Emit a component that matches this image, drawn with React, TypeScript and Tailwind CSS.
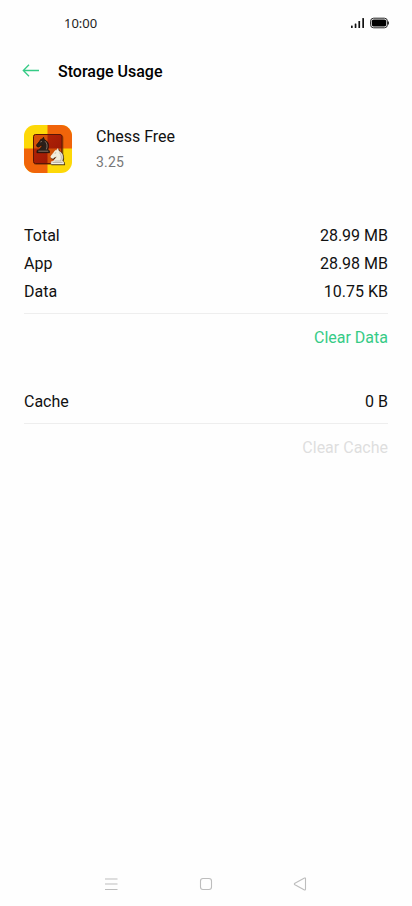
type Row = { label: string; value: string };

const usage: Row[] = [
  { label: "Total", value: "28.99 MB" },
  { label: "App", value: "28.98 MB" },
  { label: "Data", value: "10.75 KB" },
];

const KNIGHT =
  "M1.200 16h12.600l-.2-2-1.500-1.300c1.500-3.600.8-7.500-2.700-9.300L8.600 2.700 7.800.5 6.700 2.300 5 2.700 3.800 4.600.8 8.300l.5 1.700 1.800.4 1.700-1.300 2.200-.3-2.600 3-.6 1.200-2.400.7z";

function ChessIcon() {
  return (
    <svg className="size-12" viewBox="0 0 48 48">
      <defs>
        <clipPath id="tile">
          <rect width="48" height="48" rx="11" />
        </clipPath>
        <linearGradient id="red" x1="0" y1="0" x2="1" y2="1">
          <stop offset="0" stopColor="#b82606" />
          <stop offset="1" stopColor="#951505" />
        </linearGradient>
      </defs>
      <g clipPath="url(#tile)">
        <rect width="48" height="48" fill="#fdd808" />
        <rect x="23.500" width="25" height="23.500" fill="#f0640a" />
        <rect y="23.500" width="23.500" height="25" fill="#f0640a" />
        <rect x="9.500" y="10" width="30" height="30" rx="3" fill="#5c2500" opacity=".45" />
        <rect x="9.500" y="9.500" width="28.500" height="29" rx="2" fill="url(#red)" />
        <path d="M10 11.500q0-1.500 1.500-1.500h12v13.500H10z" fill="#d65208" />
        <path d="M23.500 23.500H37.500V36.500q0 1.500-1.500 1.500H23.500z" fill="#d05008" />
        <rect x="9.500" y="9.500" width="28.500" height="29" rx="2" fill="none" stroke="#591606" strokeWidth="1" />
      </g>
      <g transform="translate(11.700 11.700)" strokeLinejoin="round">
        <path d={KNIGHT} fill="#2b1f1a" stroke="#17100b" strokeWidth=".7" />
        <path d="M9.300 4.500c2.200 1.900 2.600 5 1.400 8.200M2.600 14.500h10M4.700 5.300l1.500-.6" fill="none" stroke="#c4a58c" strokeWidth=".6" />
      </g>
      <g transform="translate(26 23)" strokeLinejoin="round">
        <path d={KNIGHT} transform="translate(.7 .7)" fill="#241208" stroke="#241208" strokeWidth="1.200" opacity=".75" />
        <path d={KNIGHT} fill="#f1ecdd" stroke="#fffdf0" strokeWidth=".5" />
        <path d="M9.300 4.500c2.200 1.900 2.600 5 1.400 8.200M2.600 14.500h10M4.700 5.300l1.500-.6M4.500 13h7" fill="none" stroke="#8b8170" strokeWidth=".5" />
      </g>
    </svg>
  );
}

function StatusBar() {
  return (
    <div className="flex h-[46px] items-center justify-between pl-16 pr-[23px]">
      <span className="font-['Noto_Sans'] text-[13px] leading-[18px] text-[#222]">10:00</span>
      <div className="flex items-center gap-[5px]">
        <svg width="14" height="12" viewBox="0 0 14 12" fill="#111">
          <rect x="0" y="8.500" width="1.700" height="2.500" rx=".5" />
          <rect x="3.700" y="6.500" width="1.700" height="4.500" rx=".5" />
          <rect x="7.400" y="4" width="1.700" height="7" rx=".5" />
          <rect x="11.300" y="1" width="1.700" height="10" rx=".5" />
        </svg>
        <svg width="19" height="12" viewBox="0 0 19 12">
          <rect x=".6" y="1.200" width="16.800" height="9.600" rx="3" fill="none" stroke="#222" strokeWidth="1" />
          <rect x="1.800" y="2.400" width="14.400" height="7.200" rx="1.800" fill="#000" />
          <path d="M18.400 4.500v3" stroke="#222" strokeWidth="1" />
        </svg>
      </div>
    </div>
  );
}

function UsageRow({ label, value }: Row) {
  return (
    <div className="flex h-7 items-center justify-between">
      <span>{label}</span>
      <span>{value}</span>
    </div>
  );
}

function NavBar() {
  return (
    <nav className="flex h-11 items-center justify-between pl-[104px] pr-[105px] text-[#bdbdbd]">
      <svg width="14" height="14" viewBox="0 0 14 14" fill="none" stroke="currentColor">
        <path d="M1 2h12.500M1 7h12.500M1 12.500h12.500" />
      </svg>
      <svg width="14" height="14" viewBox="0 0 14 14" fill="none" stroke="currentColor" strokeWidth="1.100">
        <rect x="1.500" y="1.500" width="11" height="11" rx="2.500" />
      </svg>
      <svg width="14" height="14" viewBox="0 0 14 14" fill="none" stroke="currentColor" strokeWidth="1.100" strokeLinejoin="round">
        <path d="M11.500 1.100 1.900 6.200q-1.100.7 0 1.500l9.600 5.200q1 .4 1-.8V1.800q0-1.100-1-.7z" />
      </svg>
    </nav>
  );
}

export default function App() {
  return (
    <div className="flex h-[906px] w-full flex-col bg-[#fefefe] font-[Roboto,sans-serif] text-base text-[#111]">
      <StatusBar />
      <header className="flex h-[50px] items-center pl-[22px]">
        <svg width="18" height="14" viewBox="0 0 18 14" fill="none" stroke="#36cb86" strokeWidth="1.300">
          <path d="M17 6.500H1.500M7 .8 1.300 6.500 7 12.200" />
        </svg>
        <h1 className="ml-[18px] pt-0.5 font-medium text-black">Storage Usage</h1>
      </header>
      <main className="flex flex-1 flex-col px-6">
        <section className="mt-7 flex h-[49px] items-center gap-6">
          <ChessIcon />
          <div className="pt-0.5">
            <div className="h-6">Chess Free</div>
            <div className="pt-px text-sm leading-6 tracking-[0.2px] text-[#777]">3.25</div>
          </div>
        </section>
        <section className="mt-[49px]">
          {usage.map((row) => (
            <UsageRow key={row.label} {...row} />
          ))}
          <div className="mt-[7px] flex h-12 items-center justify-end border-t border-[#eee]">
            <button className="text-[#36cb86]">Clear Data</button>
          </div>
        </section>
        <section className="mt-[27px]">
          <UsageRow label="Cache" value="0 B" />
          <div className="mt-[7px] flex h-12 items-center justify-end border-t border-[#eee]">
            <button className="text-[#dedede]" disabled>
              Clear Cache
            </button>
          </div>
        </section>
      </main>
      <NavBar />
    </div>
  );
}
